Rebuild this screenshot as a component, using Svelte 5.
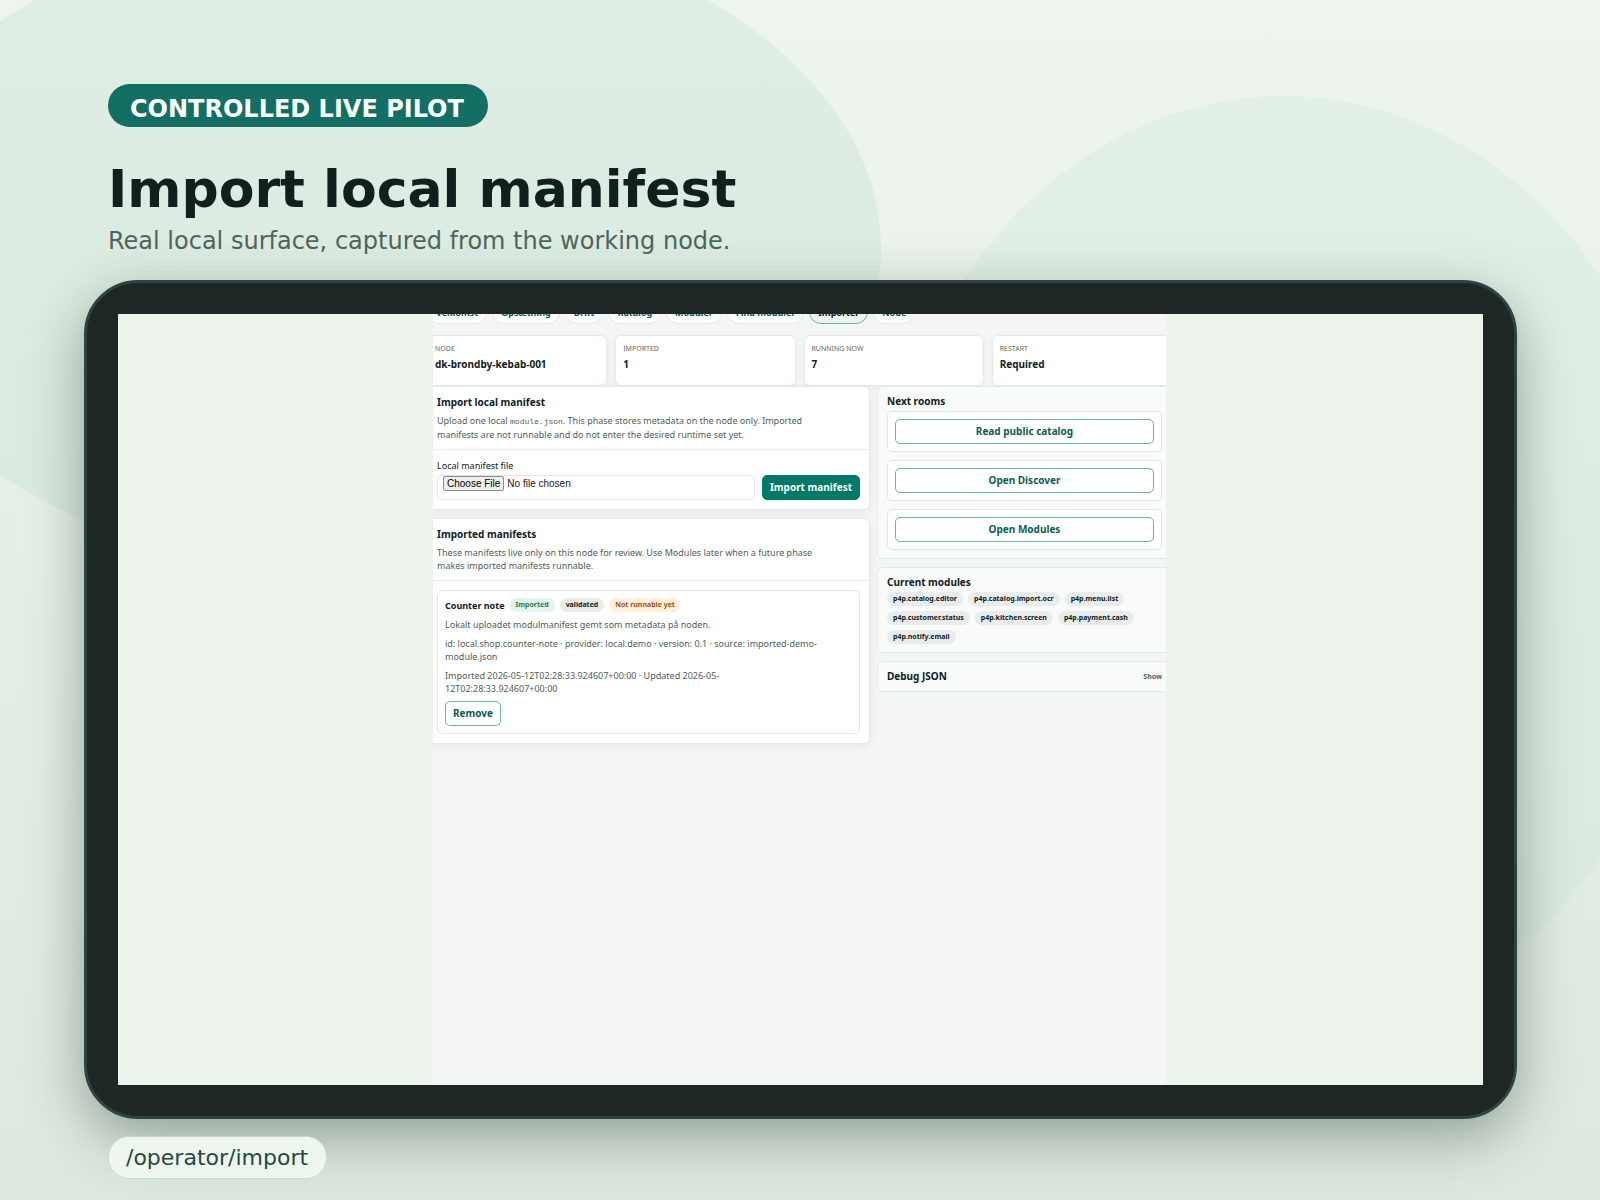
<script lang="ts">
  const tabs = ["Velkomst", "Opsætning", "Drift", "Katalog", "Moduler", "Find moduler", "Importer", "Node"];
  const active_tab = "Importer";

  const stats = [
    { label: "Node", value: "dk-brondby-kebab-001" },
    { label: "Imported", value: "1" },
    { label: "Running now", value: "7" },
    { label: "Restart", value: "Required" },
  ];

  const rooms = ["Read public catalog", "Open Discover", "Open Modules"];

  const modules = [
    "p4p.catalog.editor",
    "p4p.catalog.import.ocr",
    "p4p.menu.list",
    "p4p.customer.status",
    "p4p.kitchen.screen",
    "p4p.payment.cash",
    "p4p.notify.email",
  ];
</script>

<div class="poster">
  <svg class="backdrop" viewBox="0 0 1600 1200" preserveAspectRatio="none" aria-hidden="true">
    <ellipse class="blob-left" cx="371" cy="248" rx="510" ry="330" />
    <ellipse class="blob-right" cx="1283" cy="567" rx="403" ry="471" />
  </svg>

  <header>
    <span class="badge">CONTROLLED LIVE PILOT</span>
    <h1>Import local manifest</h1>
    <p class="tagline">Real local surface, captured from the working node.</p>
  </header>

  <div class="device">
    <div class="screen">
      <!-- the app is wider than the viewport and scrolled down a little -->
      <div class="viewport">
        <main class="app">
          <nav>
            {#each tabs as tab}
              <a href="#{tab}" class:active={tab === active_tab}>{tab}</a>
            {/each}
          </nav>

          <div class="stats">
            {#each stats as stat}
              <div class="stat">
                <span>{stat.label}</span>
                <strong>{stat.value}</strong>
              </div>
            {/each}
          </div>

          <div class="columns">
            <div class="column">
              <section class="card">
                <div class="card-head">
                  <h2>Import local manifest</h2>
                  <p>Upload one local <code>module.json</code>. This phase stores metadata on the node only. Imported manifests are not runnable and do not enter the desired runtime set yet.</p>
                </div>
                <form class="card-body upload">
                  <div class="field">
                    <label for="manifest">Local manifest file</label>
                    <input id="manifest" type="file" />
                  </div>
                  <button type="button" class="primary">Import manifest</button>
                </form>
              </section>

              <section class="card">
                <div class="card-head">
                  <h2>Imported manifests</h2>
                  <p>These manifests live only on this node for review. Use Modules later when a future phase makes imported manifests runnable.</p>
                </div>
                <div class="card-body">
                  <article class="manifest">
                    <div class="manifest-title">
                      <h3>Counter note</h3>
                      <span class="pill good">Imported</span>
                      <span class="pill">validated</span>
                      <span class="pill warn">Not runnable yet</span>
                    </div>
                    <p>Lokalt uploadet modulmanifest gemt som metadata på noden.</p>
                    <p>id: local.shop.counter-note · provider: local.demo · version: 0.1 · source: imported-demo-module.json</p>
                    <p>Imported 2026-05-12T02:28:33.924607+00:00 · Updated 2026-05-12T02:28:33.924607+00:00</p>
                    <button type="button">Remove</button>
                  </article>
                </div>
              </section>
            </div>

            <aside class="column">
              <section class="card side">
                <h2>Next rooms</h2>
                <div class="rooms">
                  {#each rooms as room}
                    <div class="room">
                      <button type="button">{room}</button>
                    </div>
                  {/each}
                </div>
              </section>

              <section class="card side">
                <h2>Current modules</h2>
                <div class="modules">
                  {#each modules as name}
                    <span class="pill">{name}</span>
                  {/each}
                </div>
              </section>

              <section class="card side debug">
                <h2>Debug JSON</h2>
                <button type="button">Show</button>
              </section>
            </aside>
          </div>
        </main>
      </div>
    </div>
  </div>

  <footer>
    <span class="route">/operator/import</span>
  </footer>
</div>

<style>
  :global(body) {
    margin: 0;
  }
  .poster {
    position: relative;
    isolation: isolate;
    box-sizing: border-box;
    display: flex;
    flex-direction: column;
    min-height: 100vh;
    padding: 84px 83px 21px 84px;
    overflow: hidden;
    background: linear-gradient(#eef5ee, #dce8df);
    font-family: "DejaVu Sans", sans-serif;
  }
  .backdrop {
    position: absolute;
    inset: 0;
    z-index: -1;
    width: 100%;
    height: 100%;
  }
  .blob-left {
    fill: rgb(190 222 206 / 30%);
  }
  .blob-right {
    fill: rgb(190 228 208 / 22%);
  }

  header {
    display: flex;
    flex-direction: column;
    align-items: flex-start;
    padding-left: 24px;
  }
  .badge {
    padding: 7px 24px 0 22px;
    border-radius: 22px;
    background: #136f63;
    color: #fafffa;
    font-size: 24px;
    font-weight: 700;
    line-height: 36px;
  }
  h1 {
    margin: 30px 0 0;
    color: #10201c;
    font-size: 52px;
    line-height: 64px;
  }
  .tagline {
    margin: 5px 0 23px;
    color: #50655c;
    font-size: 24px;
    line-height: 31px;
  }

  .device {
    flex: 1;
    display: flex;
    box-sizing: border-box;
    padding: 31px;
    border: 3px solid #30443f;
    border-radius: 54px;
    background: #1e2725;
    box-shadow: 0 18px 56px rgb(20 40 32 / 38%);
  }
  .screen {
    flex: 1;
    display: flex;
    justify-content: center;
    background: #ecf4ec;
  }
  .viewport {
    display: flex;
    flex-direction: column;
    align-items: center;
    width: 733px;
    margin-right: 2px;
    overflow: hidden;
    background: #f4f6f6;
  }
  .app {
    width: 745px;
    flex-shrink: 0;
    margin-top: -14px;
    color: #10201c;
    font-family: "Noto Sans", sans-serif;
    font-size: 10px;
    line-height: 13px;
  }

  nav {
    display: flex;
    gap: 5px;
  }
  nav a {
    padding: 5px 8px 4px;
    border: 1px solid #e2e8e6;
    border-radius: 12px;
    background: #fff;
    color: #0b5c52;
    font-size: 9px;
    font-weight: 700;
    line-height: 13px;
    text-decoration: none;
  }
  nav a.active {
    border-color: #6bb3a9;
    background: #edf2f0;
    color: #10201c;
  }

  .stats {
    display: grid;
    grid-template-columns: repeat(4, 1fr);
    gap: 8px;
    margin-top: 11px;
  }
  .stat {
    display: flex;
    flex-direction: column;
    gap: 3px;
    padding: 7px 7px 14px;
    border: 1px solid #e4eae8;
    border-radius: 6px;
    background: #fff;
    box-shadow: 0 2px 6px rgb(16 32 28 / 5%);
  }
  .stat span {
    color: #5a6b66;
    font-size: 7px;
    line-height: 11px;
    text-transform: uppercase;
  }
  .stat strong {
    font-size: 10px;
    line-height: 14px;
  }

  .columns {
    display: grid;
    grid-template-columns: 443px 1fr;
    gap: 7px;
    align-items: start;
  }
  .column {
    display: flex;
    flex-direction: column;
    gap: 8px;
  }
  .card {
    border: 1px solid #e1ebe7;
    border-radius: 6px;
    background: #fff;
    box-shadow: 0 2px 8px rgb(16 32 28 / 6%);
  }
  h2,
  h3,
  .card p {
    margin: 0;
  }
  h2 {
    font-size: 10px;
    line-height: 13px;
  }
  .card p {
    color: #50605b;
    font-size: 9px;
    line-height: 13px;
  }
  .card-head {
    padding: 9px 9px 8px;
    border-bottom: 1px solid #e9efed;
  }
  .card-head p {
    max-width: 400px;
    margin-top: 5px;
  }
  .card-body {
    padding: 9px;
  }
  code {
    font-family: "Liberation Mono", monospace;
    font-size: 8px;
  }

  .upload {
    display: flex;
    align-items: flex-end;
    gap: 7px;
  }
  .field {
    flex: 1;
  }
  .field label {
    display: block;
    margin-bottom: 3px;
    font-size: 9px;
    line-height: 13px;
  }
  input {
    display: block;
    box-sizing: border-box;
    width: 100%;
    height: 25px;
    padding: 0 5px;
    border: 1px solid #e1e6e4;
    border-radius: 5px;
    font-family: "Liberation Sans", sans-serif;
    font-size: 10px;
  }
  input::file-selector-button {
    margin: 0 3px 0 0;
    padding: 0 3px;
    border: 1px solid #8b8b8b;
    border-radius: 2px;
    background: #efefef;
    font-family: "Liberation Sans", sans-serif;
    font-size: 10px;
    line-height: 13px;
  }
  button {
    box-sizing: border-box;
    height: 25px;
    padding: 0 7px;
    border: 1px solid #6bb3a9;
    border-radius: 5px;
    background: #fff;
    color: #0b5c52;
    font-family: "Noto Sans", sans-serif;
    font-size: 10px;
    font-weight: 700;
    line-height: 13px;
  }
  .primary {
    border-color: #007a68;
    background: #007a68;
    color: #fff;
  }

  .manifest {
    padding: 7px;
    border: 1px solid #e1e6e4;
    border-radius: 5px;
  }
  .manifest-title {
    display: flex;
    align-items: center;
    gap: 5px;
  }
  h3 {
    font-size: 9px;
    line-height: 13px;
  }
  .manifest p {
    max-width: 380px;
    margin: 6px 0;
  }
  .pill {
    padding: 0 6px;
    border-radius: 7px;
    background: #e8edec;
    font-size: 7px;
    font-weight: 700;
    line-height: 14px;
  }
  .good {
    background: #e1f5ea;
    color: #1b804b;
  }
  .warn {
    background: #fff0de;
    color: #a84b08;
  }

  .side {
    padding: 8px 9px;
    background: #f9fbfa;
    box-shadow: none;
  }
  .rooms {
    display: flex;
    flex-direction: column;
    gap: 8px;
    margin-top: 3px;
  }
  .room {
    display: flex;
    padding: 7px;
    border: 1px solid #e1e6e4;
    border-radius: 5px;
    background: #fff;
  }
  .room button {
    flex: 1;
  }
  .modules {
    display: flex;
    flex-wrap: wrap;
    gap: 5px;
    margin-top: 3px;
  }
  .debug {
    display: flex;
    justify-content: space-between;
  }
  .debug button {
    height: auto;
    padding: 0;
    border: 0;
    background: none;
    color: #50605b;
    font-size: 7px;
    line-height: 11px;
  }

  footer {
    display: flex;
    margin-top: 17px;
    padding-left: 24px;
  }
  .route {
    padding: 0 18px 0 17px;
    border: 1px solid #c9dbd0;
    border-radius: 21px;
    background: #eff6ef;
    color: #24493f;
    font-size: 22px;
    line-height: 41px;
  }
</style>
